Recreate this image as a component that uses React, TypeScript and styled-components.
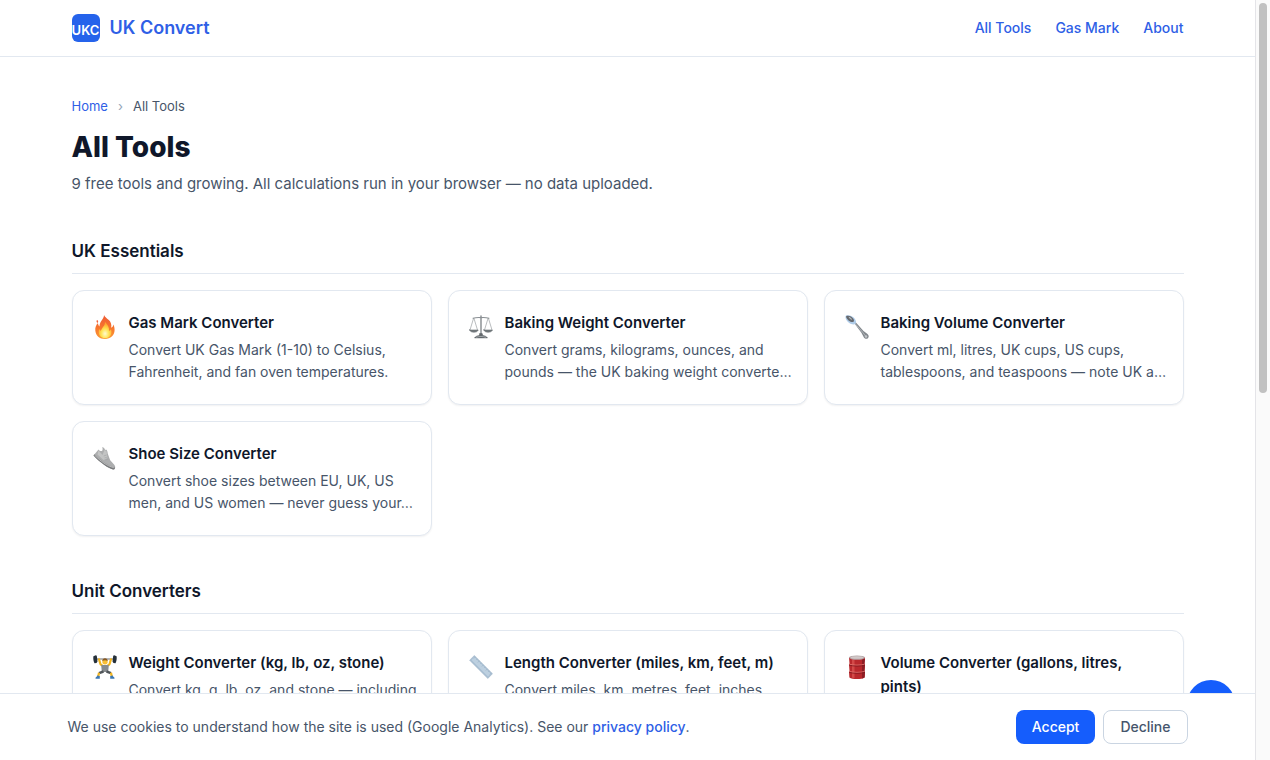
import React from "react";
import styled, { createGlobalStyle, css } from "styled-components";

const GlobalStyle = createGlobalStyle`
  *, *::before, *::after { box-sizing: border-box; }
  body {
    margin: 0;
    background: #fff;
    color: #0f172a;
    font-family: Inter, "Liberation Sans", sans-serif;
    font-size: 15px;
    line-height: 24px;
  }
  a { color: #2f5fe6; text-decoration: none; }
  h1, h2, h3, p, ol, ul { margin: 0; padding: 0; }
`;

const Shell = styled.div`
  display: flex;
  height: 100vh;
  overflow: hidden;
`;

const Viewport = styled.div`
  position: relative;
  flex: 1;
  min-width: 0;
  height: 100%;
  overflow: hidden;
`;

const ScrollRail = styled.div`
  flex: none;
  width: 15px;
  padding: 3px;
  background: #fafafa;
  border-left: 1px solid #e4e4e8;
`;

const ScrollThumb = styled.div`
  width: 8px;
  height: 390px;
  border-radius: 4px;
  background: #c1c1c1;
`;

const container = css`
  width: 100%;
  max-width: 1160px;
  margin: 0 auto;
  padding: 0 24px;
`;

const Header = styled.header`
  border-bottom: 1px solid #e2e8f0;
`;

const HeaderInner = styled.div`
  ${container}
  display: flex;
  align-items: center;
  justify-content: space-between;
  height: 56px;
`;

const Brand = styled.a`
  display: flex;
  align-items: center;
  gap: 10px;
  font-size: 18px;
  font-weight: 600;
`;

const BrandMark = styled.span`
  display: flex;
  align-items: center;
  justify-content: center;
  width: 28px;
  height: 28px;
  padding-top: 3px;
  border-radius: 6px;
  background: #2563eb;
  color: #fff;
  font-size: 13px;
  font-weight: 600;
`;

const Nav = styled.nav`
  display: flex;
  gap: 24px;
  font-size: 14px;
  font-weight: 500;
`;

const Main = styled.main`
  ${container}
  padding-top: 39px;
`;

const Breadcrumb = styled.ol`
  display: flex;
  gap: 10px;
  list-style: none;
  color: #475569;
  font-size: 13px;
  line-height: 20px;
`;

const Divider = styled.li`
  color: #94a3b8;
`;

const PageTitle = styled.h1`
  margin-top: 12px;
  font-size: 28px;
  font-weight: 800;
  line-height: 38px;
`;

const Lead = styled.p`
  margin-top: 6px;
  color: #475569;
`;

const Section = styled.section`
  margin-top: 41px;
`;

const SectionTitle = styled.h2`
  padding-bottom: 8px;
  border-bottom: 1px solid #e2e8f0;
  font-size: 17px;
  font-weight: 600;
  line-height: 28px;
`;

const CardGrid = styled.div`
  display: grid;
  grid-template-columns: repeat(3, 1fr);
  gap: 16px;
  margin-top: 16px;
`;

const Card = styled.a`
  display: flex;
  align-items: flex-start;
  gap: 12px;
  padding: 20px 12px 21px 20px;
  border: 1px solid #e2e8f0;
  border-radius: 12px;
  background: #fff;
  box-shadow: 0 1px 2px rgba(15, 23, 42, 0.06);
  color: inherit;
`;

const IconBox = styled.span`
  flex: none;
  width: 24px;
  padding-top: 4px;
  svg { display: block; width: 24px; height: 24px; }
`;

const CardBody = styled.div`
  flex: 1;
  min-width: 0;
`;

const CardTitle = styled.h3`
  padding-right: 12px;
  font-size: 15px;
  font-weight: 600;
  line-height: 24px;
`;

const CardText = styled.p`
  margin-top: 4px;
  color: #475569;
  font-size: 14px;
  line-height: 22px;
`;

const FloatingButton = styled.button`
  position: absolute;
  right: 20px;
  bottom: 32px;
  width: 48px;
  height: 48px;
  padding: 0;
  border: 0;
  border-radius: 50%;
  background: #155dfc;
`;

const CookieBar = styled.aside`
  position: absolute;
  left: 0;
  right: 0;
  bottom: 0;
  border-top: 1px solid #e2e8f0;
  background: #fff;
`;

const CookieInner = styled.div`
  display: flex;
  align-items: center;
  justify-content: space-between;
  gap: 16px;
  width: 100%;
  max-width: 1120px;
  margin: 0 auto;
  padding: 16px 0;
`;

const CookieText = styled.p`
  color: #475569;
  font-size: 14px;
  a { font-weight: 500; }
`;

const CookieActions = styled.div`
  display: flex;
  gap: 8px;
`;

const CookieButton = styled.button<{ $primary?: boolean }>`
  height: 34px;
  padding: 0 16px;
  border: ${(p) => (p.$primary ? "0" : "1px solid #cad5e2")};
  border-radius: 8px;
  background: ${(p) => (p.$primary ? "#155dfc" : "#fff")};
  color: ${(p) => (p.$primary ? "#fff" : "#45556c")};
  font: 500 14px/20px Inter, "Liberation Sans", sans-serif;
`;

const Fire = () => (
  <svg viewBox="0 0 24 24" aria-hidden="true">
    <defs>
      <linearGradient id="flame" x1="0" y1="0" x2="0" y2="1">
        <stop offset="0" stopColor="#ee5a34" />
        <stop offset="0.55" stopColor="#f7772e" />
        <stop offset="1" stopColor="#fb9b35" />
      </linearGradient>
      <radialGradient id="core" cx="0.5" cy="0.72" r="0.6">
        <stop offset="0" stopColor="#fffbd0" />
        <stop offset="0.5" stopColor="#ffe353" />
        <stop offset="1" stopColor="#ffa52e" />
      </radialGradient>
    </defs>
    <path fill="url(#flame)" d="M11 0c.2 3-2.600 5-3.800 8-.6 1.500-.6 2.600-.7 3.500-1-.7-1.500-2-1.500-3.500C3 10 2 12.500 2.300 15.500 2.700 20.500 6.500 24 12 24s9.500-3.600 9.600-9c0-2-.4-4-1.300-5.400-.2 1.800-.9 2.900-2.100 3.200.6-3.600-.4-6-2.700-8C13.700 3.300 12 2 11 0Z" />
    <path fill="#f0643c" d="M4 5c1.400.5 1.600 2 .4 3C3.400 7 3.200 6 4 5Z" />
    <path fill="url(#core)" d="M12 7c.2 3-1.800 4.600-3 6.500-.6 1-.8 1.900-1.300 2.200-.8-.3-1.300-1-1.500-1.900C4.600 18.500 6.800 23.200 12 23.200s7.600-4.600 6-9c-.6 1-1.200 1.500-2 1.600.4-3.600-1.400-6-4-8.800Z" />
  </svg>
);

const Scales = () => (
  <svg viewBox="0 0 24 24" aria-hidden="true" fill="none" stroke="#8b9094" strokeLinecap="round">
    <path strokeWidth="1.300" stroke="#7c8185" d="M12 1v19" />
    <path strokeWidth="1.100" d="M4 3.200c3-.8 5-.8 8-.6 3-.2 5-.2 8 .6" />
    <path strokeWidth="0.600" d="M4.500 3.500 1 15M5 3.500 8.500 15M19 3.500 15.500 15M19.500 3.500 23 15" />
    <path fill="#73797d" stroke="#686e72" strokeWidth="0.600" d="M.6 15h8.600c-.7 1.700-2.300 2.200-4.300 2.200S1.300 16.700.6 15ZM14.800 15h8.600c-.7 1.700-2.300 2.200-4.300 2.200s-3.600-.5-4.300-2.200Z" />
    <path fill="#63696d" stroke="#5a6064" strokeWidth="0.500" d="M10.800 18.500h2.400l.6 2c2 .3 3.700 1 4.700 2.400H5.500c1-1.400 2.700-2.100 4.700-2.400Z" />
    <path stroke="#b9bec1" strokeWidth="0.700" d="M7.500 22.200c2.800-1 6.200-1 9 0" />
  </svg>
);

const Spoon = () => (
  <svg viewBox="0 0 24 24" aria-hidden="true">
    <path fill="#83888d" d="M8.500 7.300 10 6.600l8.500 9.300 4 3c1.600 1.500 1.500 3.300.4 4.300-1.200 1-3 .8-4-.8l-2.500-4.700Z" />
    <path fill="none" stroke="#c2c7cb" strokeWidth="0.700" d="m9.500 8 8.500 9.700 3 4" />
    <path fill="#b0cdea" d="M1 .6C3.600-.5 7.600.8 9.800 3.700c1.400 2 1.600 4 .6 5.100-1.200 1.300-4.200.8-6.500-1C1.200 5.700-.5 2 1 .6Z" />
    <path fill="#65696e" d="M1.400 1.100C3.500.1 6.700 1.300 8.200 3.600c1 1.500 1 2.600.3 3.200-1 .7-3.100.2-4.700-1.100C1.800 4.200.5 1.900 1.400 1.100Z" />
    <path fill="#b5b9bd" d="M3.500 1.800c1.700.2 3 1.300 3.600 2.800-.9.300-3-.9-3.600-2.800Z" />
    <circle cx="21" cy="21.500" r="1.200" fill="#c1c4c7" />
  </svg>
);

const Shoe = () => (
  <svg viewBox="0 0 24 24" aria-hidden="true">
    <path fill="#adaeaf" d="M.5 9.600 5.500 3.500c1 1.200 2 1.800 3.300 1.500 1-.4 1-2.300.4-4 1.600.4 2.500 1.500 2.900 3l1-.5c1.200 1 1.500 2.600 1.700 4.200l2.400 6.600c1.500 2 4.700 4.300 5 6.500.1 1.700-.6 2.800-2.200 2.700C15 22.400 7.500 17 .5 9.600Z" />
    <path fill="#c3c4c4" d="m5.500 4.500 4 4.500 2-5 2 1 1 7-4 2-6-5.500Z" />
    <path fill="#77797b" d="m.5 9.600 1-1.300C8 15 14 19.200 22.100 21.700c-.4 1.400-1 1.900-2.100 1.800C15 22.400 7.500 17 .5 9.600Z" />
    <path fill="none" stroke="#d4d4d4" strokeWidth="0.700" d="M1.600 9.200C8 15.300 13.500 19.600 20.800 21.700" />
    <path fill="none" stroke="#9fa1a2" strokeWidth="0.600" d="m10.700 10 3-1M11.500 12l3-1M12.500 14l3-1" />
  </svg>
);

const Lifter = () => (
  <svg viewBox="0 0 24 24" aria-hidden="true">
    <path stroke="#6b6f75" strokeWidth="1" d="M2 4h20" />
    <path fill="#25303a" d="m.4 1.300 2.400-1 1 .5.7 5.700-1 1.400-2 .4C.5 6.700 0 3.500.4 1.300ZM23.600 1.300l-2.400-1-1 .5-.7 5.700 1 1.400 2 .4c1-1.600 1.500-4.800 1.100-7Z" />
    <path fill="none" stroke="#f3b51d" strokeWidth="2.200" strokeLinecap="round" strokeLinejoin="round" d="m6 4.300 1.500 5 3 2M18 4.300l-1.500 5-3 2" />
    <circle cx="12" cy="6.800" r="2.700" fill="#fac036" />
    <path fill="#8a5a20" d="M9.300 6C9.300 4 10.500 3.200 12 3.200s2.700.8 2.700 2.800c-1.300-1-4-1-5.400 0Z" />
    <path fill="#898d90" d="M8.200 10h7.600l-.6 7H8.800Z" />
    <path fill="none" stroke="#50565a" strokeWidth="2.500" d="M10.500 16.500 6 18.200M13.500 16.500l4.500 1.700" />
    <path fill="none" stroke="#f3b51d" strokeWidth="2.200" d="m6 17.700-.7 3.500M18 17.700l.7 3.500" />
    <path fill="#3c78b4" d="m4 20.500 2.800.5v2.800H2.500c0-1.300.5-1.800 1.500-2.200ZM20 20.500l-2.800.5v2.800h4.300c0-1.300-.5-1.800-1.500-2.200Z" />
  </svg>
);

const Ruler = () => (
  <svg viewBox="0 0 24 24" aria-hidden="true">
    <path fill="#a9bfd3" stroke="#9ab0c5" strokeWidth="0.500" d="m.6 5.200 4.700-4.700L23.500 18.700l-4.700 4.800Z" />
    <path fill="#bdd0e0" d="m2.500 5 2.800-2.900L21.800 18.700 19 21.500Z" />
    <path fill="none" stroke="#8ea7bd" strokeWidth="0.500" d="m6.500 1.800-1.700 1.700M8.500 3.800 7.300 5M10.500 5.800 8.800 7.500M12.500 7.800 11.300 9M14.500 9.800l-1.700 1.700M16.500 11.800 15.300 13M18.500 13.800l-1.700 1.700M20.500 15.800 19.300 17M22.500 17.800l-1.700 1.700" />
  </svg>
);

const Barrel = () => (
  <svg viewBox="0 0 24 24" aria-hidden="true">
    <path fill="#b9282d" d="M4 2.500h16l-.5 6 .5 1-.5 6.500.5 1-.4 5.500C17 24.500 7 24.500 4.400 22.500L4 17l.5-1L4 9.500l.5-1Z" />
    <path fill="#df5a58" d="M7 4.500h2.500v18.600L7 22.700Z" opacity="0.650" />
    <path fill="#8e1d24" d="M17 4h3l-.5 4.500.5 1-.5 6.500.5 1-.4 5.500-2.600 1Z" />
    <path fill="none" stroke="#e77874" strokeWidth="0.900" d="M4.200 9.200c4 1.300 11.600 1.300 15.600 0M4.200 16.400c4 1.300 11.600 1.300 15.600 0" />
    <path fill="none" stroke="#7d161d" strokeWidth="0.800" d="M4.200 10.100c4 1.300 11.600 1.300 15.600 0M4.200 17.300c4 1.300 11.600 1.300 15.600 0" />
    <ellipse cx="12" cy="2.600" rx="8" ry="2.200" fill="#b4a5a6" />
    <ellipse cx="12" cy="2.500" rx="6.500" ry="1.300" fill="#d1c9c9" />
  </svg>
);

type Tool = { icon: React.ReactNode; title: string; text: string };

const sections: { title: string; tools: Tool[] }[] = [
  {
    title: "UK Essentials",
    tools: [
      { icon: <Fire />, title: "Gas Mark Converter", text: "Convert UK Gas Mark (1-10) to Celsius, Fahrenheit, and fan oven temperatures." },
      { icon: <Scales />, title: "Baking Weight Converter", text: "Convert grams, kilograms, ounces, and pounds — the UK baking weight converte…" },
      { icon: <Spoon />, title: "Baking Volume Converter", text: "Convert ml, litres, UK cups, US cups, tablespoons, and teaspoons — note UK a…" },
      { icon: <Shoe />, title: "Shoe Size Converter", text: "Convert shoe sizes between EU, UK, US men, and US women — never guess your…" },
    ],
  },
  {
    title: "Unit Converters",
    tools: [
      { icon: <Lifter />, title: "Weight Converter (kg, lb, oz, stone)", text: "Convert kg, g, lb, oz, and stone — including" },
      { icon: <Ruler />, title: "Length Converter (miles, km, feet, m)", text: "Convert miles, km, metres, feet, inches," },
      { icon: <Barrel />, title: "Volume Converter (gallons, litres, pints)", text: "" },
    ],
  },
];

export default function App() {
  return (
    <Shell>
      <GlobalStyle />
      <Viewport>
        <Header>
          <HeaderInner>
            <Brand href="#">
              <BrandMark>UKC</BrandMark>
              UK Convert
            </Brand>
            <Nav>
              <a href="#tools">All Tools</a>
              <a href="#gas-mark">Gas Mark</a>
              <a href="#about">About</a>
            </Nav>
          </HeaderInner>
        </Header>
        <Main>
          <nav aria-label="Breadcrumb">
            <Breadcrumb>
              <li><a href="#">Home</a></li>
              <Divider aria-hidden="true">›</Divider>
              <li>All Tools</li>
            </Breadcrumb>
          </nav>
          <PageTitle>All Tools</PageTitle>
          <Lead>9 free tools and growing. All calculations run in your browser — no data uploaded.</Lead>
          {sections.map((section) => (
            <Section key={section.title}>
              <SectionTitle>{section.title}</SectionTitle>
              <CardGrid>
                {section.tools.map((tool) => (
                  <Card key={tool.title} href="#">
                    <IconBox>{tool.icon}</IconBox>
                    <CardBody>
                      <CardTitle>{tool.title}</CardTitle>
                      {tool.text && <CardText>{tool.text}</CardText>}
                    </CardBody>
                  </Card>
                ))}
              </CardGrid>
            </Section>
          ))}
        </Main>
        <FloatingButton type="button" aria-label="Back to top" />
        <CookieBar aria-label="Cookie notice">
          <CookieInner>
            <CookieText>
              We use cookies to understand how the site is used (Google Analytics). See our{" "}
              <a href="#privacy">privacy policy</a>.
            </CookieText>
            <CookieActions>
              <CookieButton type="button" $primary>Accept</CookieButton>
              <CookieButton type="button">Decline</CookieButton>
            </CookieActions>
          </CookieInner>
        </CookieBar>
      </Viewport>
      <ScrollRail aria-hidden="true">
        <ScrollThumb />
      </ScrollRail>
    </Shell>
  );
}
